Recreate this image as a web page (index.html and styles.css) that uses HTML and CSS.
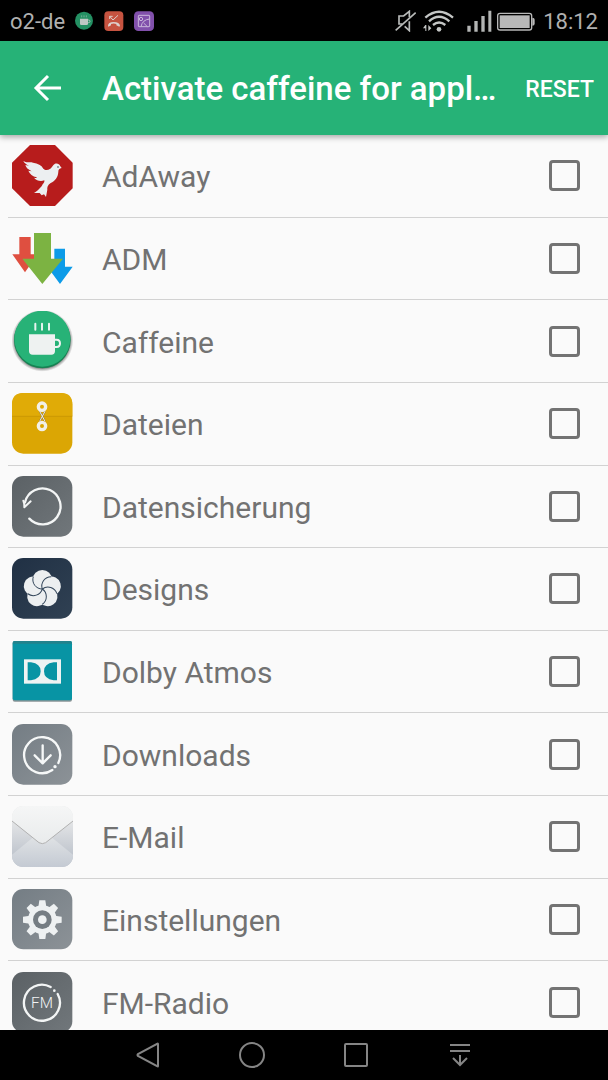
FILE: index.html
```html
<!DOCTYPE html>
<html lang="en">
<head>
<meta charset="utf-8">
<meta name="viewport" content="width=device-width, initial-scale=1">
<title>Activate caffeine for applications</title>
<link rel="stylesheet" href="styles.css">
</head>
<body>
<div class="status">
  <span class="carrier">o2-de</span>
  <div class="notices">
    <svg class="notice" viewBox="222 30 60 60"><circle cx="252" cy="59" r="27" fill="#249063"/><path d="M240 53h24v15q0 4-4 4h-16q-4 0-4-4z" fill="#bfc8c4"/><path d="M264 57h2q4 0 4 4t-4 4h-2" fill="none" stroke="#bfc8c4" stroke-width="2.5"/><path d="M245 43v6M252 43v6M259 43v6" stroke="#7fb59e" stroke-width="2.5"/></svg>
    <svg class="notice" viewBox="314 30 60 60"><rect x="315" y="31" width="57" height="59" rx="12" fill="#c65340"/><path d="M326 74q0-10 17-11q18 1 19 11l-2 3l-9-4v-4q-8-3-16 0v4l-8 4z" fill="#ddcfcb"/><path d="M356 43L341 57L331 46M331 54v-8h9" fill="none" stroke="#ddcfcb" stroke-width="3"/></svg>
    <svg class="notice" viewBox="405 30 60 60"><rect x="405" y="31" width="60" height="59" rx="13" fill="#8150ab"/><g fill="none" stroke="#c9b6db" stroke-width="3"><rect x="418" y="43" width="34" height="34" rx="2"/><circle cx="426" cy="54" r="5"/><path d="M426 77Q430 56 452 54M434 66l11 11"/></g></svg>
  </div>
  <div class="radios">
    <svg class="mute" viewBox="276 28 63 66"><g fill="none" stroke="#b8bab9" stroke-width="5"><path d="M278 89L338 36"/><path d="M298 70H288V46H302L319 32V50M319 62V90L305 77"/></g></svg>
    <svg class="wifi" viewBox="360 28 93 66"><g fill="none" stroke="#c4c6c5" stroke-width="7"><path d="M367 51Q408 16 450 51M378 62Q408 35 439 62M390 73Q408 58 427 73"/></g><circle cx="408" cy="86" r="7" fill="#c4c6c5"/><path d="M360 83l7-10h3v18h-3v-8zM376 73l9 10l-9 8z" fill="#c4c6c5"/></svg>
  </div>
  <div class="power">
    <svg class="signal" viewBox="492 28 75 66"><path d="M493 75h10v18h-10zM514 61h10v32h-10zM535 46h10v47h-10zM556 30h9v63h-9z" fill="#b3b5b4"/></svg>
    <svg class="battery" viewBox="582 28 114 66"><rect x="584" y="38" width="102" height="50" rx="7" fill="none" stroke="#b8b8b8" stroke-width="4"/><rect x="590" y="44" width="90" height="38" fill="#b8b8b8"/><path d="M688 51q7 0 7 6v12q0 6-7 6z" fill="#b8b8b8"/></svg>
  </div>
  <time class="clock">18:12</time>
</div>

<header class="toolbar">
  <button class="back" aria-label="Back"><svg viewBox="0 0 28 28"><path d="M28 14H3M15 2L3 14L15 26" fill="none" stroke="#fff" stroke-width="3"/></svg></button>
  <h1 class="title">Activate caffeine for appl…</h1>
  <button class="reset">RESET</button>
</header>

<main class="content">
<ul class="apps">
  <li class="row"><label class="app">
    <svg class="icon" viewBox="36 27 183 183"><path d="M90 27h75l53 53v77l-53 53H90l-54-53V80z" fill="#b71c1c"/><path d="M70 75C80 82 90 76 99 80C114 82 124 87 130 98C136 104 144 102 151 98C157 94 158 87 164 84C170 81 178 83 181 91L185 96C178 97 175 101 175 107C174 124 165 135 152 141C143 147 141 154 142 161L138 183L132 175L125 178L119 171L102 171C112 166 124 154 128 145C132 141 134 137 133 133C121 137 110 134 102 125C108 127 111 126 110 124C98 121 89 114 85 104L95 106C84 100 78 95 76 87L87 89C78 85 73 81 70 75Z" fill="#eceff1"/><circle cx="174" cy="93" r="2.5" fill="#37474f"/></svg>
    <span class="name">AdAway</span><input class="check" type="checkbox"></label></li>
  <li class="row"><label class="app">
    <svg class="icon" viewBox="36 29 183 183"><path d="M58 56h34v52h21L75 162L37 108h21z" fill="#df4f40"/><path d="M163 91h32v54h23L180 197L142 145h21z" fill="#0c9be8"/><path d="M102 44h51v77h36L127 197L67 121h35z" fill="#7cb342"/></svg>
    <span class="name">ADM</span><input class="check" type="checkbox"></label></li>
  <li class="row"><label class="app">
    <svg class="icon" viewBox="36 31 183 183"><defs><radialGradient id="cupShadow"><stop offset=".88" stop-color="#555" stop-opacity=".75"/><stop offset="1" stop-color="#777" stop-opacity="0"/></radialGradient></defs><circle cx="127" cy="120" r="93" fill="url(#cupShadow)"/><circle cx="127" cy="118" r="85" fill="#178353"/><circle cx="127" cy="114" r="84" fill="#27b277"/><path d="M87 101h78v50q0 11-11 11H98q-11 0-11-11z" fill="#eef2f1"/><path d="M164 117h6q10 0 10 11t-10 11h-6" fill="none" stroke="#eef2f1" stroke-width="6"/><path d="M106 69v18M126 69v18M147 69v18" stroke="#e7f3ee" stroke-width="6" stroke-linecap="round"/></svg>
    <span class="name">Caffeine</span><input class="check" type="checkbox"></label></li>
  <li class="row"><label class="app">
    <svg class="icon" viewBox="36 28 183 183"><rect x="36" y="28" width="181" height="182" rx="34" fill="#dba604"/><path d="M36 97V62Q36 28 70 28H183Q217 28 217 62V97z" fill="#e0ab07"/><path d="M36 98H217" stroke="#c39305" stroke-width="2"/><path d="M119 83L135 113M135 83L119 113" stroke="#8c7440" stroke-width="5"/><path d="M119 83L135 113M135 83L119 113" stroke="#eee" stroke-width="3"/><g fill="none" stroke="#f2f0e8" stroke-width="10"><circle cx="126" cy="69" r="11"/><circle cx="126" cy="127" r="11"/></g></svg>
    <span class="name">Dateien</span><input class="check" type="checkbox"></label></li>
  <li class="row"><label class="app">
    <svg class="icon" viewBox="36 276 183 183"><defs><linearGradient id="slate" x2="1" y2="1"><stop stop-color="#5b6165"/><stop offset="1" stop-color="#71777b"/></linearGradient></defs><rect x="36" y="276" width="181" height="182" rx="34" fill="url(#slate)"/><path d="M88 404A54 54 0 1 0 75 355" fill="none" stroke="#f3f5f5" stroke-width="7" stroke-linecap="round"/><path d="M70 350Q74 360 73 370L92 352" fill="none" stroke="#f3f5f5" stroke-width="6" stroke-linecap="round" stroke-linejoin="round"/></svg>
    <span class="name">Datensicherung</span><input class="check" type="checkbox"></label></li>
  <li class="row"><label class="app">
    <svg class="icon" viewBox="36 32 183 183"><defs><linearGradient id="navy" x2="1" y2="1"><stop stop-color="#203044"/><stop offset="1" stop-color="#304153"/></linearGradient></defs><rect x="36" y="32" width="181" height="182" rx="34" fill="url(#navy)"/><g fill="#eceff0"><circle cx="127" cy="97" r="29"/><circle cx="127" cy="97" r="29" transform="rotate(72 127 125)"/><circle cx="127" cy="97" r="29" transform="rotate(144 127 125)"/><circle cx="127" cy="97" r="29" transform="rotate(216 127 125)"/><circle cx="127" cy="97" r="29" transform="rotate(288 127 125)"/></g><g fill="none" stroke="#33465a" stroke-width="3"><path id="vein" d="M127 125A28 28 0 0 1 100 88"/><use href="#vein" transform="rotate(72 127 125)"/><use href="#vein" transform="rotate(144 127 125)"/><use href="#vein" transform="rotate(216 127 125)"/><use href="#vein" transform="rotate(288 127 125)"/></g></svg>
    <span class="name">Designs</span><input class="check" type="checkbox"></label></li>
  <li class="row"><label class="app">
    <svg class="icon" viewBox="36 280 183 183"><rect x="38" y="284" width="178" height="178" rx="6" fill="#8a9496"/><rect x="38" y="280" width="178" height="178" rx="6" fill="#0894a4"/><path d="M38 288v-2q0-6 6-6h166q6 0 6 6v2z" fill="#22838d"/><rect x="72" y="335" width="111" height="73" fill="#eef3f3"/><path d="M83 344h10q29 4 29 27t-29 27H83zM171 344h-10q-29 4-29 27t29 27h10z" fill="#0894a4"/></svg>
    <span class="name">Dolby Atmos</span><input class="check" type="checkbox"></label></li>
  <li class="row"><label class="app">
    <svg class="icon" viewBox="36 30 183 183"><defs><linearGradient id="steel" x2="1" y2="1"><stop stop-color="#747d84"/><stop offset="1" stop-color="#8c9297"/></linearGradient></defs><rect x="36" y="30" width="181" height="182" rx="34" fill="url(#steel)"/><g fill="none" stroke="#f6f8f8" stroke-width="7" stroke-linecap="round"><path d="M157 168A54 54 0 1 1 175 147"/><path d="M128 94V147M104 124L128 148L152 124" stroke-linejoin="round"/></g><circle cx="165" cy="158" r="5" fill="#f6f8f8"/></svg>
    <span class="name">Downloads</span><input class="check" type="checkbox"></label></li>
  <li class="row"><label class="app">
    <svg class="icon" viewBox="36 277 183 183"><defs><linearGradient id="flap" x2="0" y2="1"><stop stop-color="#f5f6f6"/><stop offset="1" stop-color="#e9ebec"/></linearGradient><linearGradient id="sides" x2="0" y2="1"><stop offset=".2" stop-color="#e7e8e9"/><stop offset=".85" stop-color="#bcc2cb"/></linearGradient><linearGradient id="front" x2="0" y2="1"><stop stop-color="#e6e8e9"/><stop offset="1" stop-color="#c4cad3"/></linearGradient><clipPath id="mailTile"><rect x="36" y="277" width="183" height="183" rx="34"/></clipPath></defs><g clip-path="url(#mailTile)"><path d="M36 277h183v183H36z" fill="url(#sides)"/><path d="M36 423L127 348L219 423V460H36z" fill="url(#front)"/><path d="M36 277H219V322L137 387Q127 393 117 387L36 322z" fill="url(#flap)"/><path d="M36 322L117 387Q127 393 137 387L219 322" fill="none" stroke="#b0b0b0" stroke-width="3"/></g></svg>
    <span class="name">E-Mail</span><input class="check" type="checkbox"></label></li>
  <li class="row"><label class="app">
    <svg class="icon" viewBox="36 35 183 183"><rect x="36" y="35" width="181" height="181" rx="34" fill="url(#steel)"/><g fill="#eef1f2"><path id="tooth" d="M115 90L118 69H136L139 90z"/><use href="#tooth" transform="rotate(45 127 127)"/><use href="#tooth" transform="rotate(90 127 127)"/><use href="#tooth" transform="rotate(135 127 127)"/><use href="#tooth" transform="rotate(180 127 127)"/><use href="#tooth" transform="rotate(225 127 127)"/><use href="#tooth" transform="rotate(270 127 127)"/><use href="#tooth" transform="rotate(315 127 127)"/><circle cx="127" cy="127" r="43"/></g><circle cx="127" cy="127" r="28" fill="#757d83"/><circle cx="127" cy="127" r="13" fill="#eef1f2"/></svg>
    <span class="name">Einstellungen</span><input class="check" type="checkbox"></label></li>
  <li class="row"><label class="app">
    <svg class="icon" viewBox="36 282 183 183"><rect x="36" y="282" width="181" height="182" rx="34" fill="url(#slate)"/><path d="M152 327A54 54 0 1 0 173 348" fill="none" stroke="#f3f5f5" stroke-width="7" stroke-linecap="round"/><circle cx="163" cy="338" r="4" fill="#f3f5f5"/><text class="fm" x="126" y="391" text-anchor="middle">FM</text></svg>
    <span class="name">FM-Radio</span><input class="check" type="checkbox"></label></li>
</ul>
</main>

<nav class="nav">
  <button class="key" aria-label="Back"><svg viewBox="0 0 28 28"><path d="M24 3V25Q24 26 23 25L4 15Q3 14 4 13L23 3Q24 2 24 3z"/></svg></button>
  <button class="key" aria-label="Home"><svg viewBox="0 0 28 28"><circle cx="14" cy="14" r="12"/></svg></button>
  <button class="key" aria-label="Recent apps"><svg viewBox="0 0 28 28"><rect x="3" y="3" width="22" height="22" rx="1"/></svg></button>
  <button class="key" aria-label="Notifications"><svg viewBox="0 0 28 28"><path d="M4 4H24M4 10H24M14 14V24M7 17L14 24L21 17"/></svg></button>
</nav>
</body>
</html>
```
FILE: styles.css
```css
* {
  box-sizing: border-box;
}

body {
  margin: 0;
  height: 100vh;
  display: flex;
  flex-direction: column;
  overflow: hidden;
  background: #fafafa;
  font-family: Roboto, "Liberation Sans", sans-serif;
}

button {
  border: 0;
  padding: 0;
  background: none;
  color: inherit;
  font: inherit;
}

svg {
  display: block;
  flex: none;
}

.status {
  flex: none;
  display: flex;
  align-items: center;
  height: 41px;
  padding: 0 10px;
  background: #000;
  color: #b0b0b0;
  font-size: 22px;
  line-height: 26px;
}

.carrier,
.clock {
  padding-top: 2px;
}

.notices {
  display: flex;
  gap: 10px;
  margin-left: 9px;
}

.notice {
  width: 20px;
  height: 20px;
}

.radios {
  display: flex;
  gap: 7px;
  margin-left: auto;
}

.power {
  display: flex;
  gap: 5px;
  margin: 0 8px 0 13px;
}

.mute,
.wifi,
.signal,
.battery {
  height: 22px;
}

.mute { width: 21px; }
.wifi { width: 31px; }
.signal { width: 25px; }
.battery { width: 38px; }

.toolbar {
  flex: none;
  z-index: 1;
  display: flex;
  align-items: center;
  height: 94px;
  padding: 0 14px 0 33px;
  background: #26b277;
  color: #fff;
  box-shadow: 0 2px 6px rgba(0, 0, 0, 0.35);
}

.back {
  width: 28px;
  height: 28px;
  margin-right: 41px;
}

.title {
  flex: 1;
  min-width: 0;
  margin: 0;
  padding-top: 2px;
  overflow: hidden;
  text-overflow: ellipsis;
  white-space: nowrap;
  font-size: 33px;
  font-weight: 500;
  line-height: 44px;
}

.reset {
  padding-top: 2px;
  font-size: 23px;
  font-weight: 500;
}

.content {
  flex: 1;
  min-height: 0;
  overflow: hidden;
}

.apps {
  display: grid;
  grid-auto-rows: 1fr;
  min-height: 909px;
  margin: 0;
  padding: 0 0 0 8px;
  list-style: none;
}

.row {
  display: flex;
  border-bottom: 1px solid #d2d2d2;
}

.app {
  flex: 1;
  display: flex;
  align-items: center;
  padding: 0 28px 0 4px;
}

.icon {
  width: 61px;
  height: 61px;
}

.name {
  flex: 1;
  padding: 3px 0 0 29px;
  color: #727272;
  font-size: 30px;
  line-height: 40px;
}

.check {
  appearance: none;
  width: 31px;
  height: 31px;
  margin: 0;
  border: 3px solid #737373;
  border-radius: 4px;
}

.check:checked {
  background: #26b277;
}

.fm {
  fill: #f3f5f5;
  font-size: 46px;
  font-weight: 300;
}

.nav {
  flex: none;
  display: flex;
  height: 50px;
  padding: 0 96px;
  background: #000;
}

.key {
  flex: 1;
  display: flex;
  align-items: center;
  justify-content: center;
}

.key svg {
  width: 28px;
  height: 28px;
  fill: none;
  stroke: #858585;
  stroke-width: 2;
}
```
